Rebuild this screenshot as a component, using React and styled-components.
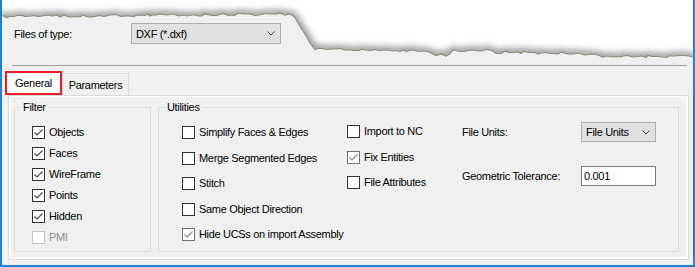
import React, { useMemo } from 'react';
import styled, { createGlobalStyle } from 'styled-components';

const GlobalStyle = createGlobalStyle`
  html, body {
    margin: 0;
    background: #ffffff;
  }
  body {
    font-family: "Liberation Sans", Arial, sans-serif;
    font-size: 11px;
    letter-spacing: -0.32px;
    color: #000;
  }
`;

// torn paper edge along the top of the screenshot
const tornPoints = () => {
  let seed = 11;
  const rnd = () => {
    seed = (seed * 16807) % 2147483647;
    return seed / 2147483647;
  };
  const pts = [];
  for (let x = 0; x <= 695; ) {
    let base;
    if (x < 292) base = 16.5 - (x / 292) * 2.5;
    else if (x < 314) base = 14 + ((x - 292) / 22) * 34;
    else if (x < 430) base = 49 + ((x - 314) / 116) * 2;
    else if (x < 450) base = 55;
    else if (x < 490) base = 50.5;
    else if (x < 600) base = 52 + ((x - 490) / 110) * 2.5;
    else base = 56.5;
    const j = (rnd() - 0.5) * (x >= 292 && x < 314 ? 3 : 2.4);
    pts.push([x, Math.round((base + j) * 2) / 2]);
    x += 2 + Math.floor(rnd() * 5);
  }
  pts.push([695, 56.5]);
  return pts;
};

const TornEdge = () => {
  const pts = useMemo(tornPoints, []);
  const line = pts.map(([x, y]) => `${x},${y}`).join(' ');
  return (
    <EdgeSvg width="695" height="64" viewBox="0 0 695 64">
      <defs>
        <clipPath id="above">
          <polygon points={`0,0 ${line} 695,0`} />
        </clipPath>
        <filter id="blur" x="-5%" y="-50%" width="110%" height="200%">
          <feGaussianBlur stdDeviation="3.6" />
        </filter>
      </defs>
      <polygon points={`0,0 ${line} 695,0`} fill="#ffffff" />
      <g clipPath="url(#above)">
        <polyline
          points={line}
          fill="none"
          stroke="#4a4a4a"
          strokeWidth="6"
          opacity="0.7"
          filter="url(#blur)"
        />
      </g>
      <polyline points={line} fill="none" stroke="#8b8b7a" strokeWidth="1.2" />
    </EdgeSvg>
  );
};

const Chevron = () => (
  <svg width="8" height="5" viewBox="0 0 8 5">
    <path d="M0.5 0.5 L4 4 L7.5 0.5" fill="none" stroke="#3c3c3c" strokeWidth="1" />
  </svg>
);

const Check = ({ checked, muted, disabled, children }) => (
  <CheckRow disabled={disabled}>
    <Box muted={muted} disabled={disabled}>
      {checked && (
        <svg width="11" height="11" viewBox="0 0 11 11">
          <path
            d="M1.5 5.5 L4 8 L9.5 2.5"
            fill="none"
            stroke={muted ? '#8a8a8a' : '#4a4a4a'}
            strokeWidth="1.2"
          />
        </svg>
      )}
    </Box>
    <span>{children}</span>
  </CheckRow>
);

export default function App() {
  return (
    <>
      <GlobalStyle />
      <Window>
        <TornEdge />
        <TopRow>
          <FieldLabel width={117}>Files of type:</FieldLabel>
          <Select width={150} height={21}>
            <span>DXF (*.dxf)</span>
            <Chevron />
          </Select>
        </TopRow>
        <Separator />
        <TabStrip>
          <Tab active>General</Tab>
          <Tab>Parameters</Tab>
        </TabStrip>
        <Panel>
          <PanelInner>
            <Group width={137}>
              <Legend>Filter</Legend>
              <Column gap={8} pad={12} left={17}>
                <Check checked>Objects</Check>
                <Check checked>Faces</Check>
                <Check checked>WireFrame</Check>
                <Check checked>Points</Check>
                <Check checked>Hidden</Check>
                <Check disabled>PMI</Check>
              </Column>
            </Group>
            <Group width={521}>
              <Legend>Utilities</Legend>
              <Utilities>
                <Column gap={12.5} pad={12} width={165}>
                  <Check>Simplify Faces &amp; Edges</Check>
                  <Check>Merge Segmented Edges</Check>
                  <Check>Stitch</Check>
                  <Check>Same Object Direction</Check>
                  <Check checked muted>Hide UCSs on import Assembly</Check>
                </Column>
                <Column gap={12.5} pad={11} width={115}>
                  <Check>Import to NC</Check>
                  <Check checked muted>Fix Entities</Check>
                  <Check>File Attributes</Check>
                </Column>
                <Settings>
                  <span>File Units:</span>
                  <Select width={75} height={20}>
                    <span>File Units</span>
                    <Chevron />
                  </Select>
                  <span>Geometric Tolerance:</span>
                  <TextInput>0.001</TextInput>
                </Settings>
              </Utilities>
            </Group>
          </PanelInner>
        </Panel>
      </Window>
    </>
  );
}

const Window = styled('div')`
  position: relative;
  box-sizing: border-box;
  width: 695px;
  height: 267px;
  padding-top: 23px;
  background: #f0f0f0;
  border: 2px solid #1883d7;
  border-top: none;
  overflow: hidden;
`;

const EdgeSvg = styled('svg')`
  position: absolute;
  top: 0;
  left: -2px;
  display: block;
`;

const TopRow = styled('div')`
  display: flex;
  align-items: center;
  margin-left: 12px;
`;

const FieldLabel = styled('span')`
  width: ${(p) => p.width}px;
`;

const Select = styled('div')`
  box-sizing: border-box;
  display: flex;
  align-items: center;
  justify-content: space-between;
  width: ${(p) => p.width}px;
  height: ${(p) => p.height}px;
  padding: 0 5px 0 4px;
  background: #e1e1e1;
  border: 1px solid #adadad;
`;

const Separator = styled('div')`
  height: 1px;
  margin: 21px 6px 0 10px;
  background: #a0a0a0;
`;

const TabStrip = styled('div')`
  display: flex;
  align-items: flex-end;
  height: 24px;
  margin: 5px 0 0 3px;
`;

const Tab = styled('div')`
  box-sizing: border-box;
  display: flex;
  align-items: center;
  justify-content: center;
  width: ${(p) => (p.active ? 57 : 67)}px;
  height: ${(p) => (p.active ? 24 : 22)}px;
  background: ${(p) => (p.active ? '#ffffff' : '#f0f0f0')};
  border: ${(p) => (p.active ? '2px solid #ec1c24' : '1px solid #d9d9d9')};
  border-bottom: ${(p) => (p.active ? '2px solid #ec1c24' : 'none')};
  padding-top: ${(p) => (p.active ? 0 : 1)}px;
`;

const Panel = styled('div')`
  box-sizing: border-box;
  width: 681px;
  height: 165px;
  margin-left: 6px;
  padding: 1px 2px 2px 2px;
  background: #ffffff;
  border: 1px solid #d9d9d9;
`;

const PanelInner = styled('div')`
  box-sizing: border-box;
  display: flex;
  align-items: flex-start;
  gap: 7px;
  height: 100%;
  padding: 4px 0 0 3px;
  background: #f0f0f0;
`;

const Group = styled('fieldset')`
  box-sizing: border-box;
  width: ${(p) => p.width}px;
  height: 151px;
  margin: 0;
  padding: 0;
  min-width: 0;
  border: 1px solid #dcdcdc;
`;

const Legend = styled('legend')`
  margin-left: 6px;
  padding: 0 2px;
  line-height: 13px;
`;

const Column = styled('div')`
  display: flex;
  flex-direction: column;
  gap: ${(p) => p.gap}px;
  padding-top: ${(p) => p.pad}px;
  padding-left: ${(p) => p.left || 0}px;
  width: ${(p) => (p.width ? `${p.width}px` : 'auto')};
  flex-shrink: 0;
`;

const Utilities = styled('div')`
  display: flex;
  align-items: flex-start;
  padding-left: 23px;
`;

const CheckRow = styled('div')`
  display: flex;
  align-items: center;
  gap: 4px;
  height: 13px;
  line-height: 13px;
  white-space: nowrap;
  color: ${(p) => (p.disabled ? '#8d8d8d' : '#000')};
`;

const Box = styled('div')`
  box-sizing: border-box;
  display: flex;
  align-items: center;
  justify-content: center;
  width: 13px;
  height: 13px;
  flex-shrink: 0;
  background: #ffffff;
  border: 1px solid
    ${(p) => (p.disabled ? '#c4c4c4' : p.muted ? '#6e6e6e' : '#333333')};
`;

const Settings = styled('div')`
  display: grid;
  grid-template-columns: 119px 75px;
  grid-auto-rows: 20px;
  row-gap: 24px;
  align-items: center;
  padding-top: 8px;
  white-space: nowrap;
`;

const TextInput = styled('div')`
  box-sizing: border-box;
  display: flex;
  align-items: center;
  height: 20px;
  padding-left: 2px;
  background: #ffffff;
  border: 1px solid #7a7a7a;
`;
